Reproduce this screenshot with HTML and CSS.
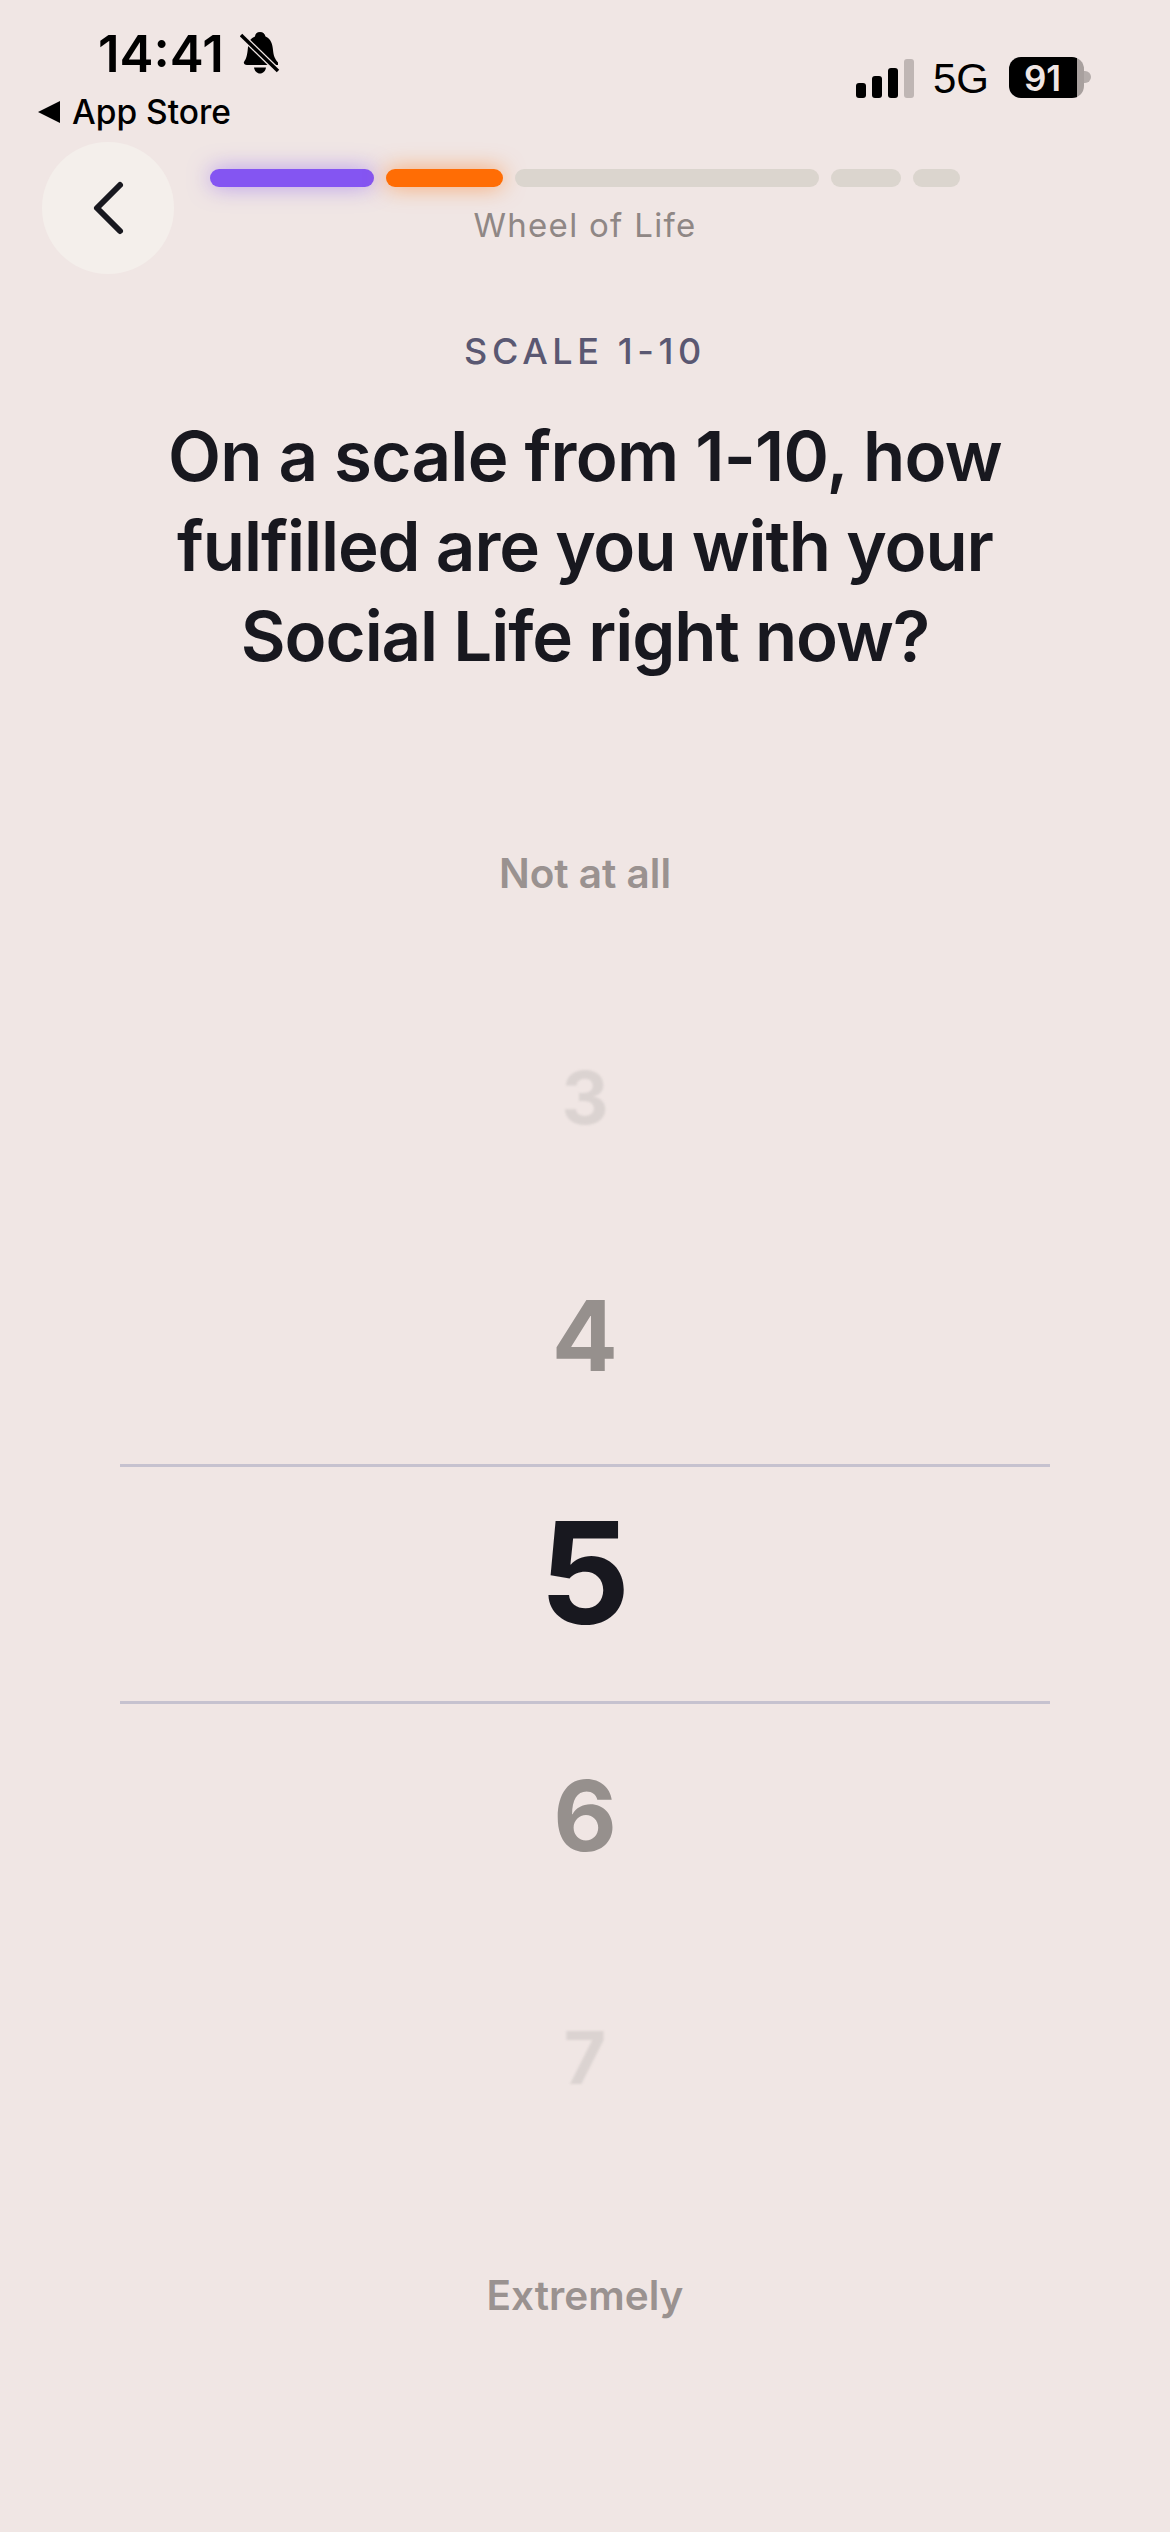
FILE: index.html
```html
<!DOCTYPE html>
<html lang="en">
<head>
    <meta charset="UTF-8">
    <meta name="viewport" content="width=device-width, initial-scale=1.0">
    <title>Wheel of Life</title>
    <link rel="stylesheet" href="styles.css">
</head>
<body>

<div class="status">
    <div class="status-left">
        <div class="time-row">
            <span class="time">14:41</span>
            <svg class="bell" viewBox="0 0 40 42" width="40" height="42">
                <path d="M20 0c3 0 5 2 5.500 4.500C31 7 32.500 12 33 18c.5 6 2 9 5 12.500V33H7c-3 0-4-2-2.500-4C7 26 7.500 20 8 15 8.500 9 11 6 15 4.500 15 2 17 0 20 0z" fill="#000"/>
                <path d="M14 35.500h12c-.5 3.500-3 6-6 6s-5.500-2.500-6-6z" fill="#000"/>
                <path d="M1 3l37 36" stroke="#f0e6e4" stroke-width="6"/>
                <path d="M1 3l37 36" stroke="#000" stroke-width="3.500"/>
            </svg>
        </div>
        <div class="back-app">
            <svg viewBox="0 0 22 22" width="22" height="22"><path d="M0 11L22 0v22z" fill="#000"/></svg>
            <span>App Store</span>
        </div>
    </div>
    <div class="status-right">
        <div class="signal">
            <i class="s1"></i><i class="s2"></i><i class="s3"></i><i class="s4"></i>
        </div>
        <span class="net">5G</span>
        <div class="battery"><span>91</span></div>
        <div class="nub"></div>
    </div>
</div>

<div class="header">
    <button class="back">
        <svg viewBox="0 0 34 60" width="34" height="60">
            <path d="M29 7L6 30l23 23" fill="none" stroke="#18181f" stroke-width="6" stroke-linecap="round" stroke-linejoin="round"/>
        </svg>
    </button>
    <div class="progress">
        <div class="bars">
            <div class="bar purple"></div>
            <div class="bar orange"></div>
            <div class="bar long"></div>
            <div class="bar mid"></div>
            <div class="bar short"></div>
        </div>
        <div class="section">Wheel of Life</div>
    </div>
</div>

<div class="eyebrow">SCALE 1-10</div>
<h1 class="question"><span class="wide">On a scale from 1-10, how</span><br>fulfilled are you with your<br>Social Life right now?</h1>

<div class="picker">
    <div class="label first">Not at all</div>
    <div class="num far n3"><span>3</span></div>
    <div class="num near n4">4</div>
    <div class="num current">5</div>
    <div class="num near n6">6</div>
    <div class="num far n7"><span>7</span></div>
    <div class="label">Extremely</div>
</div>

</body>
</html>
```

FILE: styles.css
```css
* {
    box-sizing: border-box;
}
body {
    margin: 0;
    height: 2532px;
    overflow: hidden;
    background-color: #f0e6e4;
    font-family: Inter, "Liberation Sans", sans-serif;
    color: #18181f;
}

/* status bar */
.status {
    display: flex;
    justify-content: space-between;
    height: 142px;
    padding: 26px 79px 0 38px;
}
.time-row {
    display: flex;
    align-items: center;
    gap: 16px;
    padding-left: 60px;
    height: 54px;
}
.time {
    font-size: 51px;
    font-weight: 600;
    color: #000;
}
.back-app {
    display: flex;
    align-items: center;
    gap: 12px;
    margin-top: 12px;
    font-size: 33.5px;
    font-weight: 500;
    color: #000;
}
.status-right {
    display: flex;
    align-items: flex-start;
    padding-top: 31px;
}
.signal {
    display: flex;
    align-items: flex-end;
    gap: 6px;
    height: 39px;
    margin-right: 19px;
    margin-top: 2px;
}
.signal i {
    width: 10px;
    border-radius: 3px;
    background: #000;
}
.s1 { height: 15px; }
.s2 { height: 22px; }
.s3 { height: 30px; }
.signal .s4 { height: 39px; background: #bfb6b4; }
.net {
    font-family: "Liberation Sans", sans-serif;
    font-size: 42px;
    line-height: 41px;
    color: #000;
    margin-right: 20px;
    margin-top: 1px;
}
.battery {
    display: flex;
    justify-content: center;
    align-items: center;
    width: 75px;
    height: 41px;
    border-radius: 12px;
    background: linear-gradient(90deg, #000 91%, #a8a09e 91%);
    color: #f0e6e4;
    font-size: 35px;
    font-weight: 600;
    padding-right: 8px;
}
.nub {
    width: 7px;
    height: 12px;
    margin-top: 14px;
    border-radius: 0 6px 6px 0;
    background: #b5adab;
}

/* header */
.header {
    display: grid;
    grid-template-columns: 168px 750px;
    padding-left: 42px;
}
.back {
    display: flex;
    align-items: center;
    justify-content: center;
    width: 132px;
    height: 132px;
    padding: 0;
    border: none;
    border-radius: 50%;
    background-color: #f4efeb;
}
.progress {
    padding-top: 27px;
}
.bars {
    display: flex;
    gap: 12px;
}
.bar {
    height: 18px;
    border-radius: 9px;
    background-color: #dbd5ce;
}
.purple {
    width: 164px;
    background-color: #8455f2;
    box-shadow: 0 0 22px rgba(132, 85, 242, 0.55);
}
.orange {
    width: 117px;
    background-color: #ff6d05;
    box-shadow: 0 0 22px rgba(255, 109, 5, 0.55);
}
.long { width: 304px; }
.mid { width: 70px; }
.short { width: 47px; }
.section {
    margin-top: 18px;
    text-align: center;
    font-size: 33px;
    letter-spacing: 1.3px;
    color: #8f8785;
}

/* question */
.eyebrow {
    margin-top: 55px;
    text-align: center;
    font-size: 36px;
    font-weight: 500;
    letter-spacing: 4.6px;
    color: #5a5872;
}
.question {
    margin: 38px 0 0;
    text-align: center;
    font-size: 69px;
    line-height: 90px;
    font-weight: 600;
    letter-spacing: -1.1px;
}
.wide {
    letter-spacing: -0.7px;
}

/* picker, rows are not evenly spaced because the wheel is mid scroll */
.picker {
    margin: 0 120px;
    padding-top: 168px;
    text-align: center;
}
.label {
    font-size: 40.5px;
    font-weight: 600;
    line-height: 50px;
    color: #9a9290;
}
.first {
    margin-bottom: 89px;
}
.num {
    display: flex;
    align-items: center;
    justify-content: center;
    font-weight: 700;
}
.far {
    font-size: 73px;
    color: #dbd3d1;
}
.far span {
    filter: blur(0.8px);
}
.near {
    font-size: 98px;
    color: #96908d;
}
.n3 { height: 218px; }
.n4 { height: 258px; }
.n6 { height: 223px; }
.n7 { height: 261px; margin-bottom: 83px; }
.current {
    height: 240px;
    padding-bottom: 24px;
    font-size: 142px;
    color: #18181f;
    border-top: 3px solid #c6c2cf;
    border-bottom: 3px solid #c6c2cf;
}
```
